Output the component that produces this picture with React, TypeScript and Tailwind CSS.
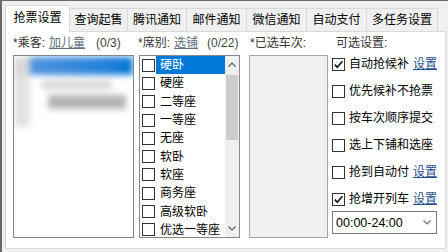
import React from "react";

const TABS = [
  { label: "抢票设置", w: "w-[65px]" },
  { label: "查询起售", w: "w-[59px]" },
  { label: "腾讯通知", w: "w-[60px]" },
  { label: "邮件通知", w: "w-[61px]" },
  { label: "微信通知", w: "w-[61px]" },
  { label: "自动支付", w: "w-[61px]" },
  { label: "多任务设置", w: "w-[72px]" },
];

const SEATS = ["硬卧", "硬座", "二等座", "一等座", "无座", "软卧", "软座", "商务座", "高级软卧", "优选一等座"];

const OPTIONS = [
  { label: "自动抢候补", checked: true, link: true },
  { label: "优先候补不抢票", checked: false, link: false },
  { label: "按车次顺序提交", checked: false, link: false },
  { label: "选上下铺和选座", checked: false, link: false },
  { label: "抢到自动付", checked: false, link: true },
  { label: "抢增开列车", checked: true, link: true },
];

function CheckBox({ checked = false }: { checked?: boolean }) {
  return (
    <span className="w-[13px] h-[13px] shrink-0 border border-[#333333] bg-white flex items-center justify-center">
      {checked && (
        <svg width="11" height="11" viewBox="0 0 11 11">
          <path d="M1.8 5.6 L4.3 8.2 L9.4 2.2" fill="none" stroke="#1a1a1a" strokeWidth="1.7" />
        </svg>
      )}
    </span>
  );
}

function Chevron({ up = false, color = "#606060" }: { up?: boolean; color?: string }) {
  return (
    <svg width="8" height="5" viewBox="0 0 8 5">
      <path d={up ? "M0.5 4.5 L4 1 L7.5 4.5" : "M0.5 0.5 L4 4 L7.5 0.5"} fill="none" stroke={color} strokeWidth="1.2" />
    </svg>
  );
}

export default function App() {
  return (
    <div
      className="w-[448px] h-[252px] overflow-hidden bg-[#f0f0f0] border-l-2 border-t border-[#6a6a6a] text-[12px] leading-[14px] text-black"
      style={{ fontFamily: '"Liberation Sans", "Noto Sans CJK SC", sans-serif' }}
    >
      {/* tab strip */}
      <div className="flex items-end h-[26px] mt-[4px] ml-[3px]">
        {TABS.map((t, i) =>
          i === 0 ? (
            <div
              key={t.label}
              className={`${t.w} h-[27px] -mb-px relative z-10 bg-white border border-b-0 border-[#d9d9d9] flex items-center justify-center pb-[3px]`}
            >
              {t.label}
            </div>
          ) : (
            <div
              key={t.label}
              className={`${t.w} h-[23px] -ml-px bg-[#f0f0f0] border border-b-0 border-[#d9d9d9] flex items-center justify-center`}
            >
              {t.label}
            </div>
          )
        )}
      </div>

      {/* panel */}
      <div className="ml-[3px] w-[441px] h-[218px] bg-white border border-[#d9d9d9] flex pt-[4px] pl-[7px]">
        {/* passengers */}
        <div className="w-[121px] flex flex-col">
          <div className="h-[14px] flex items-center whitespace-nowrap text-[#333333]">
            <span>*乘客:</span>
            <span className="ml-[4px] underline text-[#5f6e7e]">加儿童</span>
            <span className="ml-[11px] text-[#444444]">(0/3)</span>
          </div>
          <div className="mt-[5px] h-[183px] border border-[#828790] bg-white overflow-hidden">
            {/* blurred passenger entry */}
            <div className="blur-[3px] pt-[1px]">
              <div className="flex h-[18px]">
                <div className="w-[16px] bg-[#d8d8d8]" />
                <div className="flex-1 bg-gradient-to-r from-[#4f95df] to-[#0078d7]" />
              </div>
              <div className="flex h-[52px]">
                <div className="w-[16px] bg-[#e2e2e2]" />
                <div className="flex flex-col">
                  <div className="ml-[12px] mt-[6px] w-[70px] h-[8px] bg-[#d4d4d4]" />
                  <div className="ml-[18px] mt-[6px] w-[78px] h-[14px] bg-[#b4b4b4]" />
                </div>
              </div>
            </div>
          </div>
        </div>

        {/* seats */}
        <div className="w-[101px] ml-[5px] flex flex-col">
          <div className="h-[14px] flex items-center whitespace-nowrap text-[#333333] -ml-px">
            <span>*席别:</span>
            <span className="ml-[4px] underline text-[#5f6e7e]">选铺</span>
            <span className="ml-[9px] text-[#444444]">(0/22)</span>
          </div>
          <div className="mt-[5px] h-[183px] border border-[#828790] bg-white flex overflow-hidden">
            <div className="flex-1 flex flex-col">
              {SEATS.map((s, i) => (
                <div key={s} className="h-[18.3px] shrink-0 flex items-center pl-[2px]">
                  <CheckBox />
                  <span
                    className={`ml-[1px] flex-1 h-full flex items-center pl-[4px] whitespace-nowrap ${
                      i === 0 ? "bg-[#0078d7] text-white" : ""
                    }`}
                  >
                    {s}
                  </span>
                </div>
              ))}
            </div>
            {/* scrollbar */}
            <div className="w-[14px] bg-[#f0f0f0] flex flex-col">
              <div className="h-[17px] flex items-center justify-center">
                <Chevron up />
              </div>
              <div className="mt-[2px] h-[65px] mx-[1px] bg-[#cdcdcd]" />
              <div className="flex-1" />
              <div className="h-[17px] flex items-center justify-center">
                <Chevron />
              </div>
            </div>
          </div>
        </div>

        {/* selected trains */}
        <div className="w-[79px] ml-[9px] flex flex-col">
          <div className="h-[14px] flex items-center whitespace-nowrap text-[#333333] pl-[1px]">*已选车次:</div>
          <div className="mt-[5px] h-[183px] border border-[#a6a6a6] bg-[#f0f0f0]" />
        </div>

        {/* options */}
        <div className="w-[105px] ml-[4px] flex flex-col">
          <div className="h-[14px] flex items-center whitespace-nowrap text-[#333333] pl-[4px]">可选设置:</div>
          <div className="mt-[7px] flex flex-col gap-[13px]">
            {OPTIONS.map((o) => (
              <div key={o.label} className="h-[14px] flex items-center whitespace-nowrap">
                <CheckBox checked={o.checked} />
                <span className="ml-[4px]">{o.label}</span>
                {o.link && <span className="ml-auto underline text-[#1f4f8f]">设置</span>}
              </div>
            ))}
          </div>
          <div className="mt-[5px] h-[23px] border border-[#7a7a7a] bg-white flex items-center pl-[3px] pr-[5px]">
            <span className="flex-1 text-[12.5px]">00:00-24:00</span>
            <Chevron color="#707070" />
          </div>
        </div>
      </div>
    </div>
  );
}
